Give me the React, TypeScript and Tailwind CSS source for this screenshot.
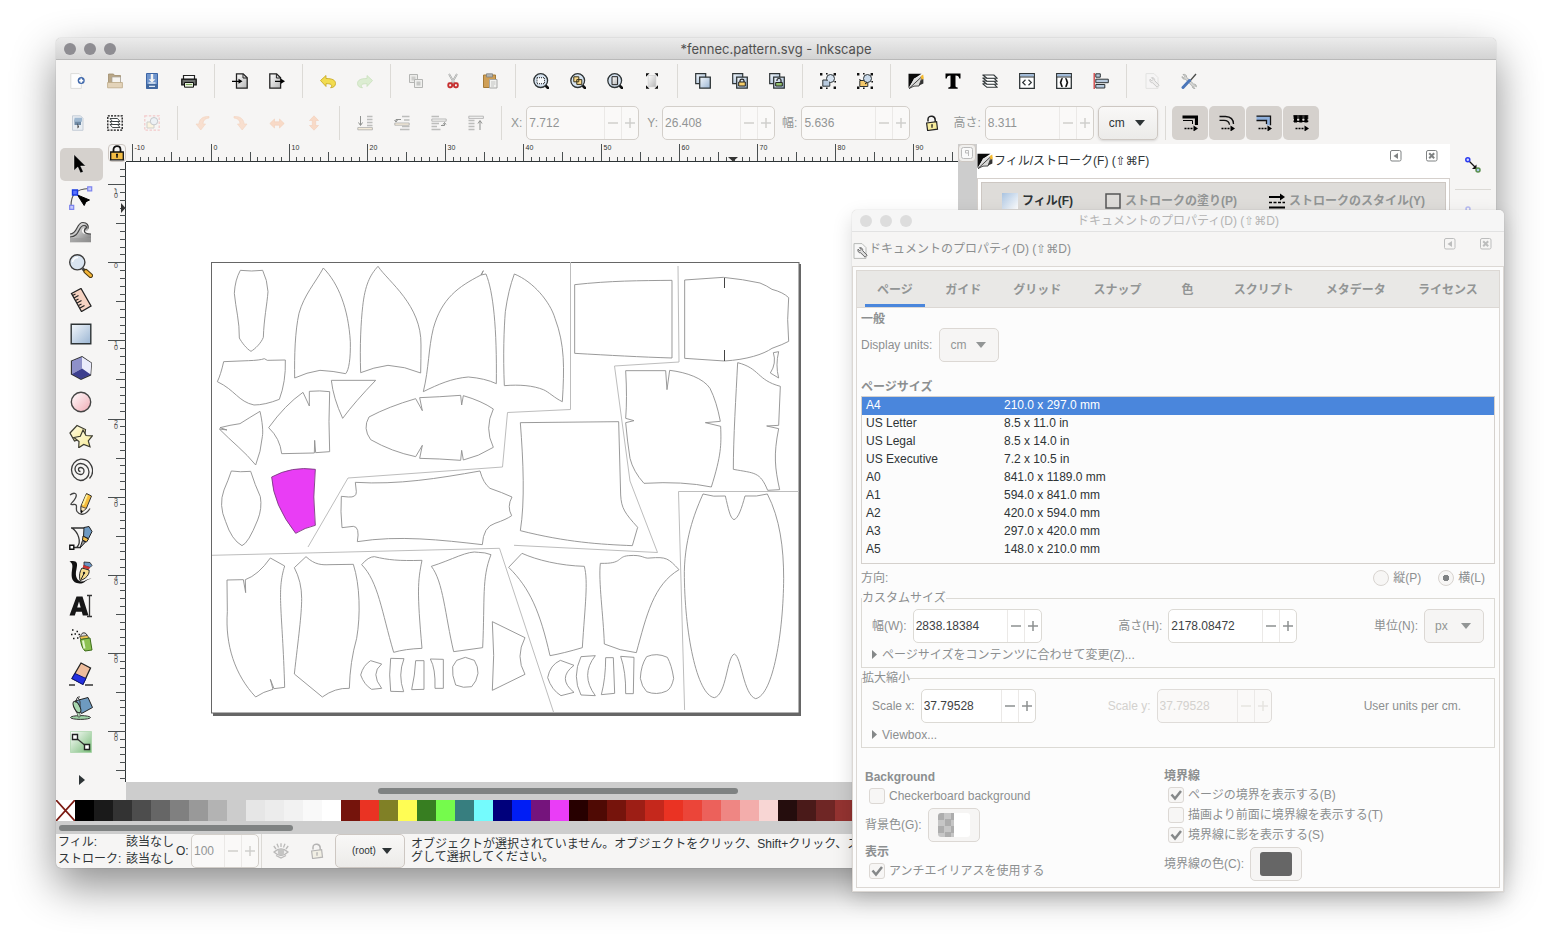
import React from "react";

type IconProps = { children: React.ReactNode; size?: "sm" | "lg"; faded?: boolean };

/** Icon canvas: "sm" is 16px (toolbars), "lg" is 24px (toolbox). */
function Icon({ children, size = "sm", faded = false }: IconProps) {
  const box = size === "sm" ? "size-4" : "size-6";
  return (
    <svg
      aria-hidden="true"
      viewBox={size === "sm" ? "0 0 16 16" : "0 0 24 24"}
      className={`${box} shrink-0 ${faded ? "opacity-30" : ""}`}
      fill="none"
    >
      {children}
    </svg>
  );
}

function Gradients() {
  const list: [string, string, string][] = [
    ["gBlue", "#f4f8fc", "#9ab5d3"],
    ["gSky", "#a9c3e0", "#ffffff"],
    ["gGrey", "#ffffff", "#b5b5b5"],
    ["gPink", "#ffffff", "#f0aab4"],
    ["gYellow", "#fffef0", "#f7e98a"],
    ["gGreen", "#ffffff", "#74b974"],
    ["gInk", "#050505", "#d9d9d9"],
    ["gWave", "#ffffff", "#777777"],
  ];
  return (
    <svg aria-hidden="true" className="absolute size-0">
      <defs>
        {list.map(([id, a, b]) => (
          <linearGradient key={id} id={id} x1="0" y1="0" x2="1" y2="1">
            <stop offset="0" stopColor={a} />
            <stop offset="1" stopColor={b} />
          </linearGradient>
        ))}
      </defs>
    </svg>
  );
}

const INK = "#2e3436";

const lens = (
  <>
    <path d="M11.5 11.5L15 15" stroke="#111" strokeWidth="2.6" strokeLinecap="round" />
    <circle cx="7.7" cy="7.6" r="6.9" fill="#d5e2ef" stroke={INK} strokeWidth="1.3" />
  </>
);

const stacked = (
  <>
    <path d="M.7.7h10v10h-10z" fill="url(#gBlue)" stroke={INK} strokeWidth="1.2" />
    <path d="M4.7 4.2h10.6v11H4.7z" fill="url(#gBlue)" stroke={INK} strokeWidth="1.3" />
  </>
);

const groupDots = (
  <g fill="#111">
    <path d="M0 0h2.4v2.4H0zM13.6 0H16v2.4h-2.4zM0 13.6h2.4V16H0zM13.6 13.6H16V16h-2.4zM6 0h1.6v1.6H6zM6 14.4h1.6V16H6zM14.4 8H16v1.6h-1.6z" />
  </g>
);

const fillPen = (
  <>
    <path d="M.5.8h13L6.500 5.500.5 15z" fill="#0a0a0a" />
    <path d="M1 15.500L6 5.500 14 2.500 11 13Q6 12 1 15.500z" fill="url(#gGrey)" />
    <path d="M1 15.500L14.500 3 11 13Q6 12 1 15.500z" fill="#d9d9d7" stroke="#222" strokeWidth=".8" />
    <path d="M12.600 3.200l2.600-1.600.6 4-2 1.600z" fill="#f5b92d" />
    <path d="M11 12.600l2.400-5.800 2-.8v4.400z" fill="#333" />
  </>
);

const pageWrench = (
  <>
    <path d="M2 .6h8l4 4v10.800H2z" fill="#f8f8f8" stroke="#b8bab8" />
    <path d="M6 6.200l1.800 1.600 1.300-1.400L7.500 4.700c1.800-.5 3.600 1 3.200 3l4.400 4.500-2 2-4.500-4.400C6.600 10 5.400 8.200 6 6.200z" fill="#dcdcdc" stroke="#666" />
  </>
);

const padlockOpen = (body: string) => (
  <>
    <path d="M4 6.500V4.300C4 2 6 .8 8.200 1.300c2 .5 3 1.900 3 3.700v2" stroke="#222" strokeWidth="1.500" />
    <path d="M2.600 8l10-1.400.9 7.600-9.900 1.300z" fill={body} stroke="#222" strokeWidth="1.200" />
    <path d="M8 9.500v3.300M7.300 9.800h1.500" stroke="#222" strokeWidth="1.300" />
  </>
);

const ICONS = {
  newDoc: (
    <>
      <path d="M.8.6h8.500l2 2.200v12.600H.8z" fill="#fdfdfd" stroke="#dcdcda" />
      <circle cx="11.200" cy="7.600" r="3.500" fill="#3f68ab" />
      <path d="M11.200 5.500v4.200M9.100 7.600h4.200" stroke="#fff" strokeWidth="1.700" />
    </>
  ),
  open: (
    <>
      <path d="M1.500 1h5l1 1.500h6v10h-12z" fill="#b9a787" stroke="#a08d6c" strokeWidth=".8" />
      <path d="M5 4h8.500v6H5z" fill="#f6f4f0" stroke="#a9a49b" strokeWidth=".7" />
      <path d="M.6 9.500h14.800v5.300H.6z" fill="#e3d3b9" stroke="#bda987" strokeWidth=".8" />
    </>
  ),
  save: (
    <>
      <path d="M2.500.5h11v15h-11z" fill="#6e94cc" stroke="#3c65a5" />
      <path d="M2.500 11h11v4.500h-11z" fill="#42699f" />
      <path d="M8 1v7" stroke="#f3f3f3" strokeWidth="2.400" />
      <path d="M4.600 6.300h6.800L8 9.800z" fill="#f3f3f3" />
      <path d="M4.500 10h7M5 13.300h6" stroke="#dce6f4" strokeWidth="1.300" />
    </>
  ),
  print: (
    <>
      <path d="M2.500 2.500h11v4h-11z" fill="#fafafa" stroke="#222" strokeWidth="1.200" />
      <path d="M.8 6.200h14.400v5.600H.8z" fill="#6e716f" stroke="#111" strokeWidth="1.300" />
      <path d="M3.500 9.500h9v4.700h-9z" fill="#eaf3df" stroke="#111" />
      <path d="M4.800 11.500h6.400" stroke="#7aa356" />
    </>
  ),
  importIcon: (
    <>
      <path d="M4.500.8h6.700l4 4v10.400H4.500z" fill="url(#gGrey)" stroke="#222" strokeWidth="1.300" />
      <path d="M11 1v4h4" stroke="#222" />
      <path d="M0 8.300h8" stroke="#000" strokeWidth="1.300" />
      <path d="M6.500 5.800l4 2.500-4 2.500z" fill="#000" />
    </>
  ),
  exportIcon: (
    <>
      <path d="M.8.8h6.800l4 4v10.400H.8z" fill="url(#gGrey)" stroke="#222" strokeWidth="1.300" />
      <path d="M7.400 1v4h4" stroke="#222" />
      <path d="M6 8.300h7" stroke="#000" strokeWidth="1.300" />
      <path d="M12 5.800l4 2.500-4 2.500z" fill="#000" />
    </>
  ),
  undo: <path d="M.5 7.500L6 2.500v3c6.500 0 9.500 1.700 9.500 4.900 0 2.400-1.700 4.200-5 4.400 2-1.800 2-4.300-4.500-4.100v2.800z" fill="#f2dc50" stroke="#c4a51d" strokeWidth=".8" />,
  redo: <path d="M15.500 7.500L10 2.500v3C3.500 5.500.5 7.200.5 10.400c0 2.400 1.700 4.200 5 4.400-2-1.800-2-4.300 4.500-4.100v2.800z" fill="#dcedd2" stroke="#c9e0bd" strokeWidth=".8" />,
  copy: (
    <>
      <path d="M1.500 1.500h8v8h-8z" fill="#ececea" stroke="#b4b5b3" />
      <path d="M3.500 3.500h4v4h-4z" fill="#cdcdcb" />
      <path d="M6.500 6.500h8v8h-8z" fill="#efefed" stroke="#b4b5b3" />
      <path d="M8.500 8.500h4v4h-4z" fill="#c6c7c5" />
    </>
  ),
  cut: (
    <>
      <path d="M4 1l5.500 9.500M12 1l-5.500 9.500" stroke="#9d9f9d" strokeWidth="1.800" />
      <path d="M4 1l5.500 9.500M12 1l-5.500 9.500" stroke="#eee" strokeWidth=".7" />
      <rect x="3.300" y="10.200" width="3.800" height="4" rx="1.200" stroke="#c62f2f" strokeWidth="1.900" />
      <rect x="9" y="10.200" width="3.800" height="4" rx="1.200" stroke="#c62f2f" strokeWidth="1.900" />
    </>
  ),
  paste: (
    <>
      <path d="M1.500 2h12v12.500h-12z" fill="#cf9f56" stroke="#a47a37" />
      <path d="M4.500.8h6V4h-6z" fill="#b5b6b3" stroke="#80827e" strokeWidth=".8" />
      <path d="M7.500 6.500H15V15H7.500z" fill="#f2f2f0" stroke="#a6a7a5" />
      <path d="M9 9h4.500M9 11h4.500M9 13h3" stroke="#c2c3c1" />
    </>
  ),
  zoomSelection: (
    <>
      {lens}
      <rect x="4" y="4.700" width="7.500" height="6" fill="#f8fafc" stroke="#222" strokeDasharray="1 1" />
    </>
  ),
  zoomDrawing: (
    <>
      {lens}
      <path d="M3.800 3.800h5v5h-5zM6.800 6.600h5v4.800h-5z" fill="#fbdc91" stroke="#3a3218" />
    </>
  ),
  zoomPage: (
    <>
      {lens}
      <path d="M5 3.700h5.600v8H5z" fill="url(#gGrey)" stroke="#222" />
    </>
  ),
  zoomWidth: (
    <>
      <path d="M4.200 2.500h7.600v11.200H4.200z" fill="url(#gGrey)" stroke="#c8c8c8" strokeWidth=".6" />
      <path d="M2 .3h3.500L2 3.800zM14 .3h-3.500L14 3.800zM2 15.700h3.500L2 12.200zM14 15.700h-3.500l3.500-3.500z" fill="#111" />
    </>
  ),
  duplicate: stacked,
  clone: (
    <>
      {stacked}
      <path d="M8 9V7.700c0-2.200 4-2.200 4 0V9" stroke="#222" strokeWidth="1.200" />
      <path d="M6.700 9h6.600v4H6.700z" fill="#f6ce6a" stroke="#222" />
    </>
  ),
  unlink: (
    <>
      {stacked}
      <path d="M8 8V7c0-2 4-2 4 0v2" stroke="#222" strokeWidth="1.200" />
      <path d="M6.700 9.500h6.600v3.500H6.700z" fill="#8fbf6a" stroke="#222" />
    </>
  ),
  group: (
    <>
      {groupDots}
      <path d="M2.800 7h7v6.200h-7z" fill="#b9cbdf" stroke={INK} />
      <circle cx="10.500" cy="5.500" r="4" fill="#d5e1ee" stroke={INK} />
      <path d="M4 8h5v4H4z" fill="#b9cbdf" />
    </>
  ),
  ungroup: (
    <>
      {groupDots}
      <path d="M2.800 7.500h8v6h-8z" fill="#f3c86b" stroke={INK} />
      <circle cx="10.500" cy="5.500" r="4" fill="#c9d9ea" stroke={INK} />
      <path d="M4 8l-1.500-2M8 11l2-1.500" stroke="#111" />
    </>
  ),
  fillStroke: fillPen,
  textIcon: <path d="M.5.5h15v5h-1.300c-.3-2.200-1.200-3-3.700-3v10.300c0 1.200.5 1.600 2.200 1.700v1.300H3.300v-1.300c1.700-.1 2.200-.5 2.200-1.700V2.500c-2.500 0-3.400.8-3.700 3H.5z" fill="#000" />,
  layers: (
    <g fill="#fff" stroke={INK} strokeWidth="1.100" strokeLinejoin="round">
      <path d="M.8 10.800h11l3.500 3.500H5z" />
      <path d="M.8 8h11l3.500 3.300H5z" />
      <path d="M.8 5h11l3.500 3.300H5z" />
      <path d="M.8 2h11l3.500 3.300H5z" />
    </g>
  ),
  xml: (
    <>
      <path d="M.7.7h14.600v14.600H.7z" fill="#fff" stroke={INK} strokeWidth="1.300" />
      <path d="M1.300 1.300h13.400v2.200H1.300z" fill="#9db9da" />
      <path d="M.7 4h14.600" stroke={INK} />
      <path d="M6.500 6.800L3.700 9.500l2.800 2.700M9.500 6.800l2.800 2.700-2.800 2.700" stroke={INK} strokeWidth="1.200" />
    </>
  ),
  css: (
    <>
      <path d="M.7.7h14.600v14.600H.7z" fill="#fff" stroke={INK} strokeWidth="1.300" />
      <path d="M1.300 1.300h13.400v2.200H1.300z" fill="#9db9da" />
      <path d="M.7 4h14.600" stroke={INK} />
      <path d="M6.700 5.500C4.300 5.500 6.300 9 4 9.500c2.300.5.3 4 2.700 4M9.300 5.500c2.400 0 .4 3.500 2.700 4-2.300.5-.3 4-2.700 4" stroke="#111" strokeWidth="1.700" />
    </>
  ),
  align: (
    <>
      <path d="M1.200 0v16" stroke="#d03a3a" strokeWidth="1.300" />
      <path d="M2.800.8h4.500v3.400H2.800zM2.800 11.500h9v3.500h-9z" fill="#b9cbdf" stroke={INK} />
      <path d="M2.800 6.200h12.500v3.500H2.800z" fill="#b9cbdf" stroke={INK} />
    </>
  ),
  docProps: pageWrench,
  prefs: (
    <>
      <path d="M2 1.500l1.800 1.800L2.500 4.800 1 3.500c0 2 1.500 3 3.300 2.600l7 7c-.2 1.700 1 2.600 2.600 2.400L12.500 14l1.300-1.400 1.600 1.200c.2-1.800-1-2.900-2.700-2.700L5.500 4.200C6 2.300 4 .8 2 1.500z" fill="#d7d7d5" stroke="#9a9c9a" strokeWidth=".7" />
      <path d="M15 1L8.500 8.500" stroke="#4a4c4a" strokeWidth="1.300" />
      <path d="M8.500 7.500L2 14.500" stroke="#4c77b9" strokeWidth="3" strokeLinecap="round" />
    </>
  ),
  selectAll: (
    <>
      <path d="M2.500.8h8L13 3.300v12H2.500z" fill="#e8edf2" stroke="#c6ced7" />
      <path d="M4.500 4.500h6.500v5.500H4.500z" fill="#6f8aa5" />
      <path d="M4.500 2.800H12v4H4.500z" fill="#9fb8d0" />
      <path d="M7.500 8v5.500L9 12z" fill="#333" />
    </>
  ),
  selectLayers: (
    <>
      <rect x=".8" y=".8" width="14.400" height="14.400" stroke="#111" strokeWidth="1.300" strokeDasharray="2 1.200" />
      <g fill="#fff" stroke={INK} strokeWidth=".9">
        <path d="M3 9.500h7.500l2.500 3H5.500z" />
        <path d="M3 6.500h7.500l2.500 3H5.500z" />
        <path d="M3 3.500h7.500l2.500 3H5.500z" />
      </g>
    </>
  ),
  deselect: (
    <>
      <rect x=".8" y=".8" width="14.400" height="14.400" stroke="#f3c9c9" strokeWidth="1.200" strokeDasharray="2.500 1.500" />
      <path d="M3 7h7v6H3z" fill="#fbf4df" stroke="#cfcfcb" />
      <circle cx="10" cy="6.200" r="3.700" fill="#edf1f5" stroke="#c5c8cb" />
    </>
  ),
  rotateCcw: <path d="M14 1.500C7.500 1 4 4.500 4 9H1l4.800 6L10.500 9H8c0-3.500 2-5.500 6-6z" fill="#f8dfcf" stroke="#f3d3c0" strokeWidth=".6" />,
  rotateCw: <path d="M2 1.500C8.500 1 12 4.500 12 9h3l-4.800 6L5.500 9H8c0-3.500-2-5.500-6-6z" fill="#f8dfcf" stroke="#f3d3c0" strokeWidth=".6" />,
  flipH: <path d="M.8 8.500L5.500 4v2.800h5V4l4.700 4.500-4.700 4.500v-2.800h-5V13z" fill="#f8dac7" stroke="#f4cfb9" strokeWidth=".6" />,
  flipV: <path d="M8 .8l4.500 4.700H9.700v5h2.800L8 15.200l-4.500-4.700h2.800v-5H3.500z" fill="#f8dac7" stroke="#f4cfb9" strokeWidth=".6" />,
  toBottom: (
    <>
      <path d="M10 1.500h5.500M10 4.500h5.500M10 7.500h5.500M10 10.500h5.500" stroke="#bcbdbb" strokeWidth="1.700" />
      <path d="M3.500 1v9M1.500 7.500l2 3 2-3" stroke="#8f918f" />
      <path d="M.8 12.600h14.600v2.200H.8z" fill="#faf0dc" stroke="#aaa" strokeWidth=".8" />
    </>
  ),
  lower: (
    <>
      <path d="M8 1.500h7.500M10 5h5.500M8 11.500h7.500M6 14.500h9.500" stroke="#bcbdbb" strokeWidth="1.700" />
      <path d="M7 4.500H2v2M.5 5l1.500 2 1.500-2" stroke="#8f918f" />
      <path d="M.8 8h14.400v2.200H.8z" fill="#faf0dc" stroke="#aaa" strokeWidth=".8" />
    </>
  ),
  raise: (
    <>
      <path d="M.5 1.500H8M.5 8.500H8M.5 11.500H6M.5 14.500h9" stroke="#bcbdbb" strokeWidth="1.700" />
      <path d="M10 10.500h3.500v-2M12 9.500l1.500-2 1.500 2" stroke="#8f918f" />
      <path d="M.8 4h14.400v2.200H.8z" fill="#f6f6f4" stroke="#aaa" strokeWidth=".8" />
    </>
  ),
  toTop: (
    <>
      <path d="M.5 5.500h6M.5 8.500h6M.5 11.500h6M.5 14.500h6" stroke="#bcbdbb" strokeWidth="1.700" />
      <path d="M12 15V6M10 8.500l2-3 2 3" stroke="#8f918f" />
      <path d="M.8 1.200h14.600v2.200H.8z" fill="#f6f6f4" stroke="#aaa" strokeWidth=".8" />
    </>
  ),
  lockOpen: padlockOpen("#f7ec9c"),
  scaleStroke: (
    <>
      <path d="M.5 2h14v8" stroke="#000" strokeWidth="3.200" />
      <path d="M1 5.500h9.500V9" stroke="#000" />
      <path d="M2.500 13.500h9" stroke="#000" strokeWidth="1.600" strokeDasharray="2 1" />
      <path d="M11.500 10.500l4.500 3-4.500 3z" fill="#000" />
    </>
  ),
  scaleCorners: (
    <>
      <path d="M.5 1.500h6Q14.500 2 14.500 9M.5 5.300h4.500q5 0 5.500 4.500" stroke="#111" strokeWidth="1.300" />
      <path d="M2.500 13.500h9" stroke="#000" strokeWidth="1.600" strokeDasharray="2 1" />
      <path d="M11.500 10.500l4.500 3-4.500 3z" fill="#000" />
    </>
  ),
  moveGradients: (
    <>
      <path d="M.5 1.200h14v9h-4V5.500H.5z" fill="#8fb0dc" />
      <path d="M.5 1.200h14v9M.5 5.500h10V9" stroke="#111" strokeWidth="1.300" />
      <path d="M2.500 13.500h9" stroke="#000" strokeWidth="1.600" strokeDasharray="2 1" />
      <path d="M11.500 10.500l4.500 3-4.500 3z" fill="#000" />
    </>
  ),
  movePatterns: (
    <>
      <path d="M.3.3h15v1.500H.3z" fill="#000" />
      <path d="M2.500.5v7M7.800.5v7M13 .5v7" stroke="#000" strokeWidth="3" />
      <path d="M.5 3h14.800M.5 6.300h14.800" stroke="#000" strokeWidth="1.500" />
      <path d="M5.200 3.800v1.600M10.400 3.800v1.600" stroke="#e5e3e0" strokeWidth="1.200" />
      <path d="M2.500 13.500h9" stroke="#000" strokeWidth="1.600" strokeDasharray="2 1" />
      <path d="M11.500 10.500l4.500 3-4.500 3z" fill="#000" />
    </>
  ),
};

type IconName = keyof typeof ICONS;

const COMMANDS: [IconName, string][][] = [
  [["newDoc", "New"], ["open", "Open"], ["save", "Save"], ["print", "Print"]],
  [["importIcon", "Import"], ["exportIcon", "Export"]],
  [["undo", "Undo"], ["redo", "Redo"]],
  [["copy", "Copy"], ["cut", "Cut"], ["paste", "Paste"]],
  [["zoomSelection", "Zoom selection"], ["zoomDrawing", "Zoom drawing"], ["zoomPage", "Zoom page"], ["zoomWidth", "Zoom page width"]],
  [["duplicate", "Duplicate"], ["clone", "Clone"], ["unlink", "Unlink clone"]],
  [["group", "Group"], ["ungroup", "Ungroup"]],
  [["fillStroke", "Fill and stroke"], ["textIcon", "Text"], ["layers", "Layers"], ["xml", "XML editor"], ["css", "Selectors"], ["align", "Align"]],
  [["docProps", "Document properties"], ["prefs", "Preferences"]],
];

const SELECT_TOOLS: [IconName, string][][] = [
  [["selectAll", "Select all"], ["selectLayers", "Select in layers"], ["deselect", "Deselect"]],
  [["rotateCcw", "Rotate left"], ["rotateCw", "Rotate right"], ["flipH", "Flip horizontal"], ["flipV", "Flip vertical"]],
  [["toBottom", "To bottom"], ["lower", "Lower"], ["raise", "Raise"], ["toTop", "To top"]],
];

function Separator() {
  return <span className="mr-[6px] ml-[7px] h-[34px] w-px shrink-0 bg-[#dcdad6]" />;
}

function ToolGroup({ items }: { items: [IconName, string][] }) {
  return (
    <>
      {items.map(([name, label]) => (
        <button key={name} aria-label={label} className="flex h-[34px] w-[37px] shrink-0 items-center justify-center">
          <Icon faded={name === "docProps"}>{ICONS[name]}</Icon>
        </button>
      ))}
    </>
  );
}

type SpinTone = "toolbar" | "dialog" | "disabled";

function Spin({ id, value, width, tone, label }: { id: string; value: string; width: string; tone: SpinTone; label: string }) {
  const frame =
    tone === "dialog" ? "border-[#dcdad5] bg-white text-[#3d4143]" : tone === "toolbar" ? "border-[#d3cfca] bg-[#faf9f8] text-[#929595]" : "border-[#dfdcd9] bg-[#faf9f8] text-[#d3d1ce]";
  const sign = tone === "dialog" ? "text-[#8d9091]" : tone === "toolbar" ? "text-[#d0cfcd]" : "text-[#e6e4e1]";
  return (
    <span className={`flex h-[34px] shrink-0 overflow-hidden rounded-[5px] border ${frame} ${width}`}>
      <input id={id} aria-label={label} defaultValue={value} className="w-0 min-w-0 flex-1 bg-transparent pb-px pl-[2px] outline-none" />
      <button aria-label={`${label} −`} className={`flex w-[17px] items-center justify-center border-l border-[#ebe9e7] ${sign}`}>
        <svg viewBox="0 0 10 10" className="size-[10px]" stroke="currentColor" strokeWidth="1.500"><path d="M0 5h10" /></svg>
      </button>
      <button aria-label={`${label} +`} className={`flex w-[17px] items-center justify-center border-l border-[#ebe9e7] ${sign}`}>
        <svg viewBox="0 0 10 10" className="size-[10px]" stroke="currentColor" strokeWidth="1.500"><path d="M0 5h10M5 0v10" /></svg>
      </button>
    </span>
  );
}

function DropDown({ id, value, label, look, width }: { id: string; value: string; label: string; look: string; width: string }) {
  return (
    <span className={`relative inline-flex h-[34px] shrink-0 items-center rounded-[5px] border ${look} ${width}`}>
      <select id={id} aria-label={label} defaultValue={value} className="h-full w-full appearance-none bg-transparent pb-px pl-[10px] outline-none">
        <option>{value}</option>
      </select>
      <svg aria-hidden="true" viewBox="0 0 10 6" className="pointer-events-none absolute right-[12px] h-[6px] w-[10px]" fill="currentColor"><path d="M0 0h10L5 6z" /></svg>
    </span>
  );
}

const TOOLS: [string, React.ReactNode][] = [
  ["Selector", <path d="M5 2.500v16l3.800-3.500 2.700 6 2.800-1.300-2.700-5.700h5z" fill="#000" stroke="#fff" strokeWidth=".4" />],
  ["Node", (
    <>
      <path d="M2 20C2 9 6 3 20 2.500" stroke="#555" strokeWidth="1.200" />
      <path d="M8.500 9L20.500 14l-3.500 1.700-1.800 3.800z" fill="#000" stroke="#000" />
      <path d="M3.500 4h5v5h-5z" fill="#5b74ff" stroke="#1a3be0" strokeWidth="1.400" />
      <path d="M18.700.8h4v4h-4zM.7 19.300h4v4h-4z" fill="#c5c9fb" stroke="#7d84ee" strokeWidth="1.200" />
    </>
  )],
  ["Tweak", (
    <>
      <path d="M1 14c8 0 6-11 14-11 4 0 6 4 4 7-2 2-5 0-4-2-3 1-3 6 2 6h5v8H1z" fill="url(#gWave)" />
      <path d="M1 14c8 0 6-11.500 13-11.500 4 0 6 3 5 6M1 17c10 0 8-11.500 14-11.500 2.500 0 3 2 2 3M22 14c-7 0-8-3-5-6" stroke="#444" strokeWidth="1.200" />
      <path d="M1 18h21v4.500H1z" fill="#999" opacity=".6" />
    </>
  )],
  ["Zoom", (
    <>
      <path d="M13.500 14.500l3 3" stroke="#444" strokeWidth="3" />
      <path d="M17 17.500l4.500 4" stroke="#4e3b12" strokeWidth="5" strokeLinecap="round" />
      <path d="M17 17.500l4.500 4" stroke="#f3b436" strokeWidth="3" strokeLinecap="round" />
      <circle cx="8.300" cy="8.300" r="7.600" fill="#d9e4f0" stroke="#3c3c3c" strokeWidth="1.400" />
      <path d="M3.500 8C4 5 6 3.500 9 3.500" stroke="#fff" strokeWidth="1.500" />
    </>
  )],
  ["Measure", (
    <>
      <path d="M2.500 5.500l9.500-5 10 17.500-9.500 5.500z" fill="#f6d3c2" stroke="#222" strokeWidth="1.300" />
      <path d="M3.500 7.500l3-1.500M5 10l4.500-2.500M6.500 12.500l3-1.500M8 15l4.500-2.500M9.500 17.500l3-1.500M11 20l4.500-2.500" stroke="#222" strokeWidth="1.200" />
    </>
  )],
  ["Rectangle", <path d="M2.200 2.200h19.600v19.600H2.200z" fill="url(#gBlue)" stroke={INK} strokeWidth="1.400" />],
  ["3D box", (
    <>
      <path d="M2.500 5L13 .8l9.300 6.200-.8 12L12 23.200l-9.500-5z" fill="#a9abd8" stroke="#333" strokeWidth="1.300" />
      <path d="M13 1v11.500l8.500 6 .8-11.500z" fill="#eaebfb" />
      <path d="M3 18l10-5.500 8.500 6-9.500 4.500z" fill="#3d3f8e" />
      <path d="M13 1v11.500L3 18V5.300z" fill="#8e90c8" />
    </>
  )],
  ["Ellipse", <circle cx="12" cy="12" r="9.700" fill="url(#gPink)" stroke="#444" strokeWidth="1.400" />],
  ["Star", (
    <>
      <path d="M1 9l7-7.500 8.500 4-1 8-10 3.500z" fill="url(#gYellow)" stroke="#3c3c30" strokeWidth="1.200" />
      <path d="M14 6l3 5.500 6.300.3-4 5 1.700 6-6.300-2.300-5 3.300.3-6.300-5-4 6.300-1.200z" fill="url(#gYellow)" stroke="#3c3c30" strokeWidth="1.200" />
    </>
  )],
  ["Spiral", <path d="M11.500 13.500A2 2 0 0 1 11.500 9.500A3.500 3.500 0 0 1 11.500 16.500A5 5 0 0 1 11.500 5.500A7.200 7.200 0 0 1 11.500 22.500A10.800 10.800 0 0 1 11.500 1.200A11 11.500 0 0 1 20.500 20.500" stroke="#3b3b3b" strokeWidth="1.300" />],
  ["Pencil", (
    <>
      <path d="M1 3c4-3 8-2 5.500 3C4 11-1 13 4 12.500c6-1 2 4 4 7 3 4.500 9 3.500 13-3" stroke="#444" strokeWidth="1.300" />
      <path d="M12 20l0-6L17.500 1.500l5 2.500L17.500 16z" fill="#f6bd3c" stroke="#333" />
      <path d="M12 14.500l5.500 2L12 21z" fill="#fbe6b8" stroke="#333" strokeWidth=".8" />
      <path d="M12 18l2 1-2 2.500z" fill="#000" />
      <path d="M18 3l-4 10" stroke="#fdf2a0" strokeWidth="2" />
    </>
  )],
  ["Bezier", (
    <>
      <path d="M2 2h14M3 2c6 4 10 14 5 19M4 21.500h8" stroke="#333" strokeWidth="1.300" />
      <path d="M15 1.500L20 .5l3 5-3.500 7-5-2z" fill="#6f9ac2" stroke="#222" />
      <path d="M14 10l5.500 3-2 3-4-2z" fill="#f3c04b" stroke="#222" />
      <path d="M13.500 14.500l3 1.500-5.500 6z" fill="#999" stroke="#222" />
      <path d="M.8 19.300h4v4h-4z" fill="#fff" stroke="#111" strokeWidth="1.400" />
    </>
  )],
  ["Calligraphy", (
    <>
      <path d="M.5 1.500C8 0 9 3 7.500 9c-2 8 1 12 5 12.500 4 0 6-4 10-2.500-5-1-6 4.500-12 4.500C2.500 23 2 17 3 10c.6-4 1-6.500-2.500-8.500z" fill="#111" />
      <path d="M15 2l6 .5 2 3-2 2-6-2z" fill="#6b95c3" stroke="#222" strokeWidth=".8" />
      <path d="M14 5l7 2.300-1 2.200-6-1.500z" fill="#c33" />
      <path d="M13 8l7 2c1 4-3 9-9 10.500-1-5-.5-9 2-12.500z" fill="#f6dc8e" stroke="#222" />
      <path d="M12 19.500l3-6" stroke="#222" />
      <circle cx="15" cy="13" r="1.200" fill="#222" />
    </>
  )],
  ["Text", (
    <>
      <path d="M.5 21.500L7.500 2.500h6l6 19h-5.700l-1-3.700H7l-1.200 3.700zM8.200 13.500h3.500L10 7.500z" fill="#161616" fillRule="evenodd" />
      <path d="M18 1.500h5M18 22.500h5M20.500 1.500v21" stroke="#333" strokeWidth="1.300" />
    </>
  )],
  ["Spray", (
    <>
      <path d="M3 2h1.500M7.500 3.500H9M2 6.500h1.500M5.500 6h1.500M9.500 6.500H11M4 10.500h1.500M8 10h1.500" stroke="#111" strokeWidth="1.700" />
      <path d="M12 9c-1-4 4-6 6-2v3" fill="#ddd" stroke="#333" />
      <path d="M10.500 8.500l8-1 1.500 2.500-8 1.500z" fill="#f1c652" stroke="#444" strokeWidth=".8" />
      <path d="M11.500 11.500l9.500-1.500 2 12-7 1c-3-3-4-7-4.500-11.500z" fill="#8cc152" stroke="#3d6d19" />
      <path d="M14 12.500l1.500 8" stroke="#e4f5cf" strokeWidth="2" />
    </>
  )],
  ["Eraser", (
    <>
      <path d="M12 1l9.500 5-7.500 16-11-5.500z" fill="#eebd9d" stroke="#222" strokeWidth="1.300" />
      <path d="M6 11.500l11 5-3.200 6L3 16.500z" fill="#2530e0" stroke="#0d1580" />
      <path d="M0 23h6M16 23h8" stroke="#333" strokeWidth="1.400" />
    </>
  )],
  ["Bucket", (
    <>
      <ellipse cx="11.500" cy="21.500" rx="10" ry="1.900" fill="#9fd5a6" stroke="#333" />
      <path d="M5 8c-2 4 4 8 4 13h2c1-5-4-9-1-13z" fill="#b4dfb9" stroke="#444" strokeWidth=".7" />
      <path d="M6 5L19 1.500l4.500 10-11 6z" fill="#6e9abf" stroke="#222" />
      <ellipse cx="8" cy="11" rx="2.800" ry="6.300" transform="rotate(-27 8 11)" fill="#a9d8b0" stroke="#222" />
      <path d="M7 7c0-5 2-6.500 4-6M8 1c4 3 3 7 3 10" stroke="#333" />
    </>
  )],
  ["Gradient", (
    <>
      <path d="M1.500 1.500h21v21h-21z" fill="url(#gGreen)" stroke="#9fd09f" strokeWidth=".6" />
      <path d="M6 7l12 10" stroke="#333" strokeWidth="1.300" />
      <path d="M3.500 4.500h5v5h-5zM15.500 14.500h5v5h-5z" fill="#fff" stroke="#222" strokeWidth="1.400" />
    </>
  )],
];

const UNIT = 78.1;
const ORIGIN_X = 211.5;
const ORIGIN_Y = 262.3;

function ticks(origin: number, from: number, to: number) {
  const out: { at: number; n: number }[] = [];
  for (let n = Math.ceil(((from - origin) / UNIT) * 10); origin + (n * UNIT) / 10 < to; n++) {
    out.push({ at: Math.round(origin + (n * UNIT) / 10) + 0.5, n });
  }
  return out;
}

function tickStart(n: number, major: number, mid: number, minor: number) {
  return n % 10 === 0 ? major : n % 5 === 0 ? mid : minor;
}

function RulerX() {
  return (
    <svg aria-hidden="true" viewBox="126 144 832 18" preserveAspectRatio="xMinYMin slice" className="h-[18px] w-full shrink-0 bg-[#f6f5f4]">
      <path d="M126 161.500H2000" stroke={INK} />
      {ticks(ORIGIN_X, 130, 958).map(({ at, n }) => (
        <g key={n}>
          <path d={`M${at - 1} ${tickStart(n, 144, 152, 157)}V161`} stroke="#4a4f50" />
          {n % 10 === 0 && (
            <text x={at + 1} y="149.500" fontSize="7" fill="#333">{n}</text>
          )}
        </g>
      ))}
      <path d="M728 157h10l-5 4.500z" fill="#333" />
    </svg>
  );
}

function RulerY() {
  return (
    <svg aria-hidden="true" viewBox="108 162 18 620" preserveAspectRatio="xMinYMin slice" className="h-[620px] w-[18px] shrink-0">
      <path d="M125.500 162V782" stroke={INK} />
      {ticks(ORIGIN_Y, 166, 782).map(({ at, n }) => (
        <g key={n}>
          <path d={`M${tickStart(n, 108, 116, 120)} ${at}H126`} stroke="#4a4f50" />
          {n % 10 === 0 &&
            String(n).split("").map((c, i) => (
              <text key={i} x="114" y={at + 5 + i * 4} fontSize="7" fill="#444">{c}</text>
            ))}
        </g>
      ))}
      <path d="M121 203v10l4.500-5z" fill="#333" />
    </svg>
  );
}

const PIECES_NW = [
  "M106 46Q140 50 173 46Q187 75 189 110C186 150 177 190 175 247C168 265 150 282 138 289C125 282 110 262 103 249C104 200 92 160 88 115Q90 75 106 46Z",
  "M355 39C400 85 430 160 436 260C437 310 432 345 422 356Q385 348 345 346Q305 352 269 369C268 300 270 230 282 175C297 120 330 85 355 39Z",
  "M519 34C550 80 650 150 648 270Q648 310 647 354Q600 334 549 331Q505 337 467 353C464 270 468 200 473 155C480 90 495 60 519 34Z",
  "M828 60L843 57C865 110 876 220 874 386Q840 370 790 366C740 370 700 388 655 410C672 340 670 280 685 220C710 130 760 95 828 60L835 47L829 60",
  "M56 320L130 317Q165 316 178 311L187 316L241 315Q243 380 223 433Q180 450 147 450C100 440 90 405 37 380Q47 360 56 320Z",
  "M379 376H512Q450 440 413 490Q385 430 379 376Z",
  "M165 469C172 500 175 530 172 545Q168 590 152 630C120 590 80 560 43 522L66 525L45 518Q75 510 105 506Q130 490 165 469Z",
  "M294 412L313 453V409Q345 406 374 410Q370 500 374 590L332 593L329 556L328 594L230 596Q225 550 191 518Q240 450 294 412Z",
  "M632 431L652 467L644 428Q700 426 767 421L770 450L775 422Q830 438 865 462Q837 520 865 577Q820 605 775 615L770 586L767 616Q700 611 644 610L652 571L632 605Q560 590 497 554Q472 520 492 486Q550 455 632 431Z",
];

const PIECES_NE = [
  "M43 57C100 80 150 140 165 190C195 270 193 340 187 440C165 430 145 410 130 404C100 392 60 388 13 392C9 300 12 220 16 170Q25 105 43 57Z",
  "M224 89C330 77 420 77 516 76V309C420 306 330 301 224 295Z",
  "M554 75L670 67Q730 73 780 84Q800 92 816 103Q850 112 866 128Q860 195 866 259Q850 268 816 280C790 298 740 314 673 318L554 310Z",
  "M820 293L836 290Q826 330 836 369L811 354Q830 325 820 293Z",
  "M377 347H497L501 404L509 346C560 352 610 370 630 400Q650 440 661 499L616 503L662 514C664 570 664 600 634 696Q550 678 432 685Q400 650 390 610Q382 560 377 503L402 497L377 490Q382 430 377 347Z",
  "M713 323C780 340 770 375 841 394L836 511L800 513L836 521C820 600 825 640 839 704L803 706C780 650 765 655 700 643C700 550 708 420 713 323Z",
  "M61 503L356 500L362 720C364 760 375 775 413 817L397 872C300 868 200 862 61 827C75 740 70 620 61 503Z",
];

const PIECES_SW = [
  "M79 18Q105 22 137 19Q150 60 166 95Q172 130 158 165Q130 235 111 242Q80 225 62 170Q40 120 57 75Q70 45 79 18Z",
  "M451 52C580 60 700 40 825 18Q835 55 855 70Q890 82 921 96Q905 125 920 152Q905 163 870 175Q835 185 832 239C710 225 580 210 457 230Q465 185 445 184L411 188Q406 140 409 94L430 96Q455 98 454 80Z",
  "M66 345L115 344L122 383L121 344Q160 330 196 279L239 303C215 380 232 430 239 667L207 671L196 643L204 673Q175 680 152 696C90 630 60 540 67 440Z",
  "M303 275C330 300 350 300 375 299L445 298C465 360 467 450 455 520Q435 590 433 670Q390 668 352 696L268 627C280 520 290 450 290 400Q290 350 268 308Z",
  "M470 299Q490 275 508 275C550 285 580 288 651 286C638 350 636 380 651 550Q600 552 566 562C530 440 520 350 470 299Z",
  "M679 304C740 285 790 255 820 262Q840 262 858 269C830 340 840 400 833 548L746 560C720 450 715 350 679 304Z",
  "M497 587L530 597Q495 625 530 670L500 673Q478 660 467 630Q475 600 497 587Z",
  "M557 580L597 581Q578 630 596 680L557 679Q551 630 557 580Z",
  "M632 587H657V673L620 674Q630 630 632 587Z",
  "M676 582L715 583V670H690Q692 610 676 582Z",
  "M755 586L781 577L808 586Q820 605 819 625Q815 650 800 665Q775 671 752 660Q740 630 743 605Z",
  "M862 470L960 518Q930 575 960 628L862 676Q870 570 862 470Z",
];

const PIECES_SE = [
  "M66 265C110 285 180 302 253 304C265 350 255 420 247 548Q190 565 150 572C120 440 90 370 26 307Z",
  "M301 295C370 297 350 275 385 272C430 268 430 282 450 279C500 275 505 280 537 314C460 360 440 450 409 563Q360 558 313 537C310 450 295 350 301 295Z",
  "M609 87Q640 97 676 93C685 130 690 160 702 164C715 160 725 130 735 93Q770 96 802 87C840 160 851 250 851 340C850 500 820 690 767 701C730 690 725 575 703 567C680 575 680 690 643 698C590 690 553 500 553 320C555 210 590 130 609 87Z",
  "M181 586L222 601Q170 640 222 682L183 692Q155 675 143 638Q150 600 181 586Z",
  "M243 575L286 572Q240 630 286 692L243 690Q215 635 243 575Z",
  "M317 578H340L344 685L304 689Q317 640 317 578Z",
  "M362 574L402 577L400 686H377Q378 620 362 574Z",
  "M440 575Q470 562 502 577Q515 600 521 640Q515 670 500 678Q470 692 440 680Q425 665 421 640Q423 600 440 575Z",
];

function Pieces({ at, paths }: { at: string; paths: string[] }) {
  return (
    <g transform={`translate(${at}) scale(.33333)`} stroke="#8f8f8f" strokeWidth="2.700">
      {paths.map((d) => (
        <path key={d} d={d} />
      ))}
    </g>
  );
}

function Drawing() {
  return (
    <svg role="img" aria-label="fennec.pattern.svg" viewBox="126 162 832 620" className="h-[620px] w-[832px] max-w-none shrink-0" fill="none">
      <path d="M213 713H799V264H801V716H213z" fill="#666" />
      <rect x="211.500" y="262.500" width="587.500" height="450.500" fill="#fff" stroke="#666" />
      <path
        d="M570.500 262V409.500L507.500 412.500 502.500 467 348 478 308 547M678 266L679 362 614.500 366 630 481 657.500 552.500 514 545.300M212 555.300L499.500 548.300 553.500 712M684.600 710L678.500 491.500H799"
        stroke="#bdbdbd"
      />
      <Pieces at="205 255" paths={PIECES_NW} />
      <Pieces at="500 255" paths={PIECES_NE} />
      <Pieces at="205 465" paths={PIECES_SW} />
      <Pieces at="500 465" paths={PIECES_SE} />
      <path d="M724.500 278v10M724.500 350v11" stroke="#444" />
      <g transform="translate(205 465) scale(.33333)">
        <path d="M200 36Q260 3 331 13Q322 95 331 181Q300 188 272 205Q205 120 200 36Z" fill="#e93df5" stroke="#7a3a80" strokeWidth="2.700" />
      </g>
    </svg>
  );
}

const SWATCHES = [
  "#000000", "#1a1a1a", "#333333", "#4d4d4d", "#666666", "#808080", "#999999", "#b3b3b3", "#cccccc", "#e6e6e6", "#ececec", "#f2f2f2", "#f9f9f9", "#ffffff",
  "#75140c", "#ea3323", "#808026", "#fffd54", "#377e21", "#75fb4c", "#377e7f", "#74fbfd", "#00007b", "#001df5", "#75147c", "#ea3df7",
  "#270000", "#4f0a04", "#76140c", "#9d1e15", "#c5281c", "#ea3323", "#eb4539", "#ec615b", "#ef8683", "#f3adab", "#f8d6d4",
  "#250d0d", "#4a1a19", "#6f2625", "#943331", "#b9403d",
];

function DockButtons({ faded = false }: { faded?: boolean }) {
  return (
    <span className={`mt-[6px] flex gap-[24px] self-start ${faded ? "text-[#bcbdbd]" : "text-[#7f8283]"}`}>
      <button aria-label="Iconify">
        <svg viewBox="0 0 12 12" className="size-3" fill="none" stroke="currentColor"><rect x=".5" y=".5" width="10.500" height="10.500" rx="1.500" /><path d="M8 3v6L3.500 6z" fill="currentColor" stroke="none" /></svg>
      </button>
      <button aria-label="Close">
        <svg viewBox="0 0 12 12" className="size-3" fill="none" stroke="currentColor"><rect x=".5" y=".5" width="10.500" height="10.500" rx="1.500" /><path d="M3.200 3.200l5 5M8.200 3.200l-5 5" strokeWidth="2" /></svg>
      </button>
    </span>
  );
}

function Lights({ color }: { color: string }) {
  return (
    <span className="flex gap-2">
      {[0, 1, 2].map((i) => (
        <span key={i} className={`size-3 rounded-full ${color}`} />
      ))}
    </span>
  );
}

function MainWindow() {
  return (
    <section className="flex flex-1 flex-col overflow-hidden rounded-[5px] bg-[#f6f5f4] shadow-[0_0_1px_rgba(0,0,0,0.4),0_18px_44px_rgba(0,0,0,0.45)]">
      <header className="relative flex h-[22px] shrink-0 items-center border-b border-[#b9b9b9] bg-linear-to-b from-[#ebebeb] to-[#d3d3d3] pl-2">
        <Lights color="bg-[#8e8d92]" />
        <h1 className="flex-1 pr-[60px] text-center font-['Inter',sans-serif] text-[13px] text-[#505050]">*fennec.pattern.svg - Inkscape</h1>
      </header>

      <div className="flex h-[42px] shrink-0 items-center pl-[3px]">
        {COMMANDS.map((items, i) => (
          <React.Fragment key={i}>
            {i > 0 && <Separator />}
            <ToolGroup items={items} />
          </React.Fragment>
        ))}
      </div>

      <div className="flex h-[42px] shrink-0 items-center pl-[3px] text-[#929595]">
        {SELECT_TOOLS.map((items, i) => (
          <React.Fragment key={i}>
            {i > 0 && <Separator />}
            <ToolGroup items={items} />
          </React.Fragment>
        ))}
        <Separator />
        <label htmlFor="x" className="mr-1 ml-[3px]">X:</label>
        <Spin id="x" label="X" value="7.712" width="w-[113px]" tone="toolbar" />
        <label htmlFor="y" className="mr-1 ml-2">Y:</label>
        <Spin id="y" label="Y" value="26.408" width="w-[113px]" tone="toolbar" />
        <label htmlFor="w" className="mr-1 ml-[7px]">幅:</label>
        <Spin id="w" label="幅" value="5.636" width="w-[109px]" tone="toolbar" />
        <button aria-label="Lock ratio" className="mr-[13px] ml-[14px] flex items-center"><Icon>{ICONS.lockOpen}</Icon></button>
        <label htmlFor="h" className="mr-1">高さ:</label>
        <Spin id="h" label="高さ" value="8.311" width="w-[109px]" tone="toolbar" />
        <span className="ml-1 flex">
          <DropDown id="unit" label="Unit" value="cm" width="w-[60px]" look="border-[#cdc7c2] bg-linear-to-b from-[#f9f8f7] to-[#ecebe9] text-[#2e3436] shadow-sm" />
        </span>
        <Separator />
        <span className="flex gap-px">
          {(["scaleStroke", "scaleCorners", "moveGradients", "movePatterns"] as IconName[]).map((n) => (
            <button key={n} aria-label={n} aria-pressed="true" className="flex h-[34px] w-9 items-center justify-center rounded-[5px] bg-[#d5d1cd]">
              <Icon>{ICONS[n]}</Icon>
            </button>
          ))}
        </span>
      </div>

      <div className="flex min-h-0 flex-1">
        <nav className="flex w-[52px] shrink-0 flex-col items-start gap-px pt-1 pl-1">
          {TOOLS.map(([label, art], i) => (
            <button key={label} aria-label={label} className={`flex h-[33px] w-[43px] shrink-0 items-center justify-center rounded-[5px] pr-px pb-px ${i === 0 ? "bg-[#d5d1cd]" : ""}`}>
              <Icon size="lg">{art}</Icon>
            </button>
          ))}
          <button aria-label="More" className="flex h-[39px] w-[43px] items-center justify-center">
            <svg viewBox="0 0 6 10" className="h-[10px] w-[6px]" fill={INK}><path d="M0 0l6 5-6 5z" /></svg>
          </button>
        </nav>

        <div className="flex w-[18px] shrink-0 flex-col">
          <button aria-label="Lock guides" className="flex h-[18px] items-center justify-center rounded-[4px] border border-[#cdc7c2] bg-[#f6f5f4]">
            <Icon>
              <path d="M4.500 7V4.500c0-4.500 7-4.500 7 0V7" stroke="#111" strokeWidth="1.800" />
              <path d="M1.700 7h12.600v7.800H1.700z" fill="#f3bd45" stroke="#111" strokeWidth="1.300" />
              <path d="M8 9v3.700M7 9.500h2" stroke="#111" strokeWidth="1.500" />
            </Icon>
          </button>
          <RulerY />
        </div>

        <div className="flex min-w-0 flex-1 flex-col">
          <RulerX />
          <div className="flex min-h-0 flex-1 overflow-hidden bg-white">
            <Drawing />
          </div>
          <div className="flex h-[18px] shrink-0 items-center bg-[#cdcdcd] pl-[252px]">
            <span className="h-[6px] w-[360px] rounded-full bg-[#7f8282]" />
          </div>
        </div>

        <div className="w-[19px] shrink-0 bg-[#cdcdcd]">
          <button aria-label="Color management" className="flex h-[18px] w-[18px] items-center justify-center rounded-[4px] border border-[#cdc7c2] bg-[#f0efed]">
            <svg viewBox="0 0 12 12" className="size-3" fill="none" stroke="#bbb"><rect x=".5" y=".5" width="11" height="11" rx="2" fill="#fafafa" /><path d="M4.500 6V3.500h3V9M4.500 6h3" /></svg>
          </button>
        </div>

        <aside className="flex w-[473px] shrink-0 flex-col bg-white text-[#2e3436]">
          <header className="flex h-[34px] shrink-0 items-center pr-3">
            <Icon>{fillPen}</Icon>
            <h2 className="flex-1 pl-px">フィル/ストローク(F) (⇧⌘F)</h2>
            <DockButtons />
          </header>
          <div className="flex-1 border border-[#d5d0cc] p-[3px]">
            <div className="flex h-full flex-col border border-[#cdc7c2]">
              <div role="tablist" className="flex h-9 items-center gap-8 bg-[#dedcd9] pl-5 font-bold text-[#929595]">
                <button role="tab" aria-selected="true" className="flex items-center gap-1 text-[#2e3436]">
                  <Icon><path d="M0 0h16v16H0z" fill="url(#gSky)" /></Icon>フィル(F)
                </button>
                <button role="tab" aria-selected="false" className="flex items-center gap-1">
                  <Icon><path d="M1 1h14v14H1z" stroke="#555" strokeWidth="1.500" /></Icon>ストロークの塗り(P)
                </button>
                <button role="tab" aria-selected="false" className="flex items-center gap-1">
                  <Icon>
                    <path d="M0 4h12M0 14.500h16" stroke="#000" strokeWidth="1.800" />
                    <path d="M0 9.500h16" stroke="#000" strokeWidth="1.500" strokeDasharray="3 1.500" />
                    <path d="M11 .5l5 3.500-5 3.500z" fill="#000" />
                  </Icon>ストロークのスタイル(Y)
                </button>
              </div>
            </div>
          </div>
        </aside>

        <aside className="flex w-[46px] shrink-0 flex-col items-center gap-[14px] pt-[13px]">
          <button aria-label="Snap" className="flex">
            <Icon>
              <path d="M4 4l7 7" stroke="#111" strokeWidth="1.300" />
              <path d="M11.500 7.500v4.500H7z" fill="#111" />
              <circle cx="2.800" cy="2.800" r="2" fill="#cfd4ff" stroke="#2b3bf0" strokeWidth="1.500" />
              <circle cx="13" cy="13" r="2" fill="#a9c8ef" stroke="#5b8f4d" strokeWidth="1.500" />
            </Icon>
          </button>
          <span className="mt-[2px] h-px w-9 bg-[#dcdad6]" />
          <button aria-label="Snap bounding box" className="flex opacity-30">
            <Icon><circle cx="3" cy="5" r="2" stroke="#2b3bf0" strokeWidth="1.500" /></Icon>
          </button>
        </aside>
      </div>

      <div className="flex h-[21px] shrink-0 overflow-hidden bg-[#cdcdcd]">
        <button aria-label="None" className="w-[19px] shrink-0 bg-white">
          <svg viewBox="0 0 19 21" className="h-[21px] w-[19px]" stroke="#7c1c14" strokeWidth="1.800"><path d="M0 0l19 21M19 0L0 21" /></svg>
        </button>
        {SWATCHES.map((c, i) => (
          <button key={i} aria-label={c} className="w-[19px] shrink-0" style={{ backgroundColor: c }} />
        ))}
      </div>
      <div className="flex h-[13px] shrink-0 items-center bg-[#cdcdcd] pl-[3px]">
        <span className="h-[6px] w-[234px] rounded-full bg-[#7f8282]" />
      </div>

      <footer className="flex h-[34px] shrink-0 items-center overflow-hidden whitespace-nowrap text-[#2e3436]">
        <dl className="grid w-[118px] shrink-0 grid-cols-[68px_1fr] pl-[2px] leading-[17px]">
          <dt>フィル:</dt><dd>該当なし</dd>
          <dt>ストローク:</dt><dd>該当なし</dd>
        </dl>
        <label htmlFor="opacity" className="w-[17px] pl-[2px]">O:</label>
        <Spin id="opacity" label="O" value="100" width="w-[68px]" tone="toolbar" />
        <span className="ml-[2px] h-[34px] w-px bg-[#dcdad6]" />
        <button aria-label="Toggle visibility" className="ml-[11px]">
          <Icon faded>
            <path d="M1 9q7-6 14 0-7 7-14 0z" fill="#eee" stroke="#333" strokeWidth="1.300" />
            <circle cx="8" cy="9" r="3.200" fill="#555" />
            <path d="M3 6L.8 3M5.500 4.500L4 .8M8 4V.3M10.500 4.500L12 .8M13 6l2.200-3M3 12.500l5 2.500 5-2.500" stroke="#333" strokeWidth="1.300" />
          </Icon>
        </button>
        <button aria-label="Lock layer" className="ml-5"><Icon faded>{padlockOpen("#e8e2c0")}</Icon></button>
        <span className="ml-[10px] flex text-[10px]">
          <DropDown id="layer" label="Layer" value="(root)" width="w-[70px] pl-[6px]" look="border-[#cdc7c2] bg-linear-to-b from-[#f9f8f7] to-[#ecebe9]" />
        </span>
        <p className="ml-[6px] leading-[13px]">
          オブジェクトが選択されていません。オブジェクトをクリック、Shift+クリック、ス
          <br />
          グして選択してください。
        </p>
      </footer>
    </section>
  );
}

const TABS: [string, string][] = [
  ["ページ", "w-[60px]"], ["ガイド", "w-[60px]"], ["グリッド", "w-[72px]"], ["スナップ", "w-[72px]"],
  ["色", "w-[52px]"], ["スクリプト", "w-[84px]"], ["メタデータ", "w-[84px]"], ["ライセンス", "w-[84px]"],
];

const SIZES: [string, string][] = [
  ["A4", "210.0 x 297.0 mm"], ["US Letter", "8.5 x 11.0 in"], ["US Legal", "8.5 x 14.0 in"], ["US Executive", "7.2 x 10.5 in"],
  ["A0", "841.0 x 1189.0 mm"], ["A1", "594.0 x 841.0 mm"], ["A2", "420.0 x 594.0 mm"], ["A3", "297.0 x 420.0 mm"], ["A5", "148.0 x 210.0 mm"],
];

function Check({ label, checked }: { label: string; checked?: boolean }) {
  return (
    <label className="flex h-5 items-center gap-1 pb-px pl-1">
      <span className="relative flex size-4">
        <input type="checkbox" defaultChecked={checked} className="peer size-4 appearance-none rounded-[3px] border border-[#dcd8d4] bg-[#f7f6f5]" />
        <svg aria-hidden="true" viewBox="0 0 16 16" className="pointer-events-none absolute inset-0 hidden size-4 peer-checked:block" fill="none" stroke="#858889" strokeWidth="2.500"><path d="M3.500 7.500L7 11.500 13 4" /></svg>
      </span>
      {label}
    </label>
  );
}

function Radio({ label, checked }: { label: string; checked?: boolean }) {
  return (
    <label className="flex items-center gap-1">
      <input
        type="radio"
        name="orientation"
        defaultChecked={checked}
        className="size-4 appearance-none rounded-full border border-[#d8d4d0] bg-[#f7f6f5] checked:bg-[radial-gradient(#7f8283_0_3px,#f7f6f5_3px)]"
      />
      {label}
    </label>
  );
}

function Expander({ label }: { label: string }) {
  return (
    <button className="flex h-6 items-center gap-[5px] pb-px pl-[10px]">
      <svg aria-hidden="true" viewBox="0 0 5 9" className="h-[9px] w-[5px]" fill="#858889"><path d="M0 0l5 4.500L0 9z" /></svg>
      {label}
    </button>
  );
}

function PropertiesDialog() {
  const unitLook = "border-[#dcd8d4] bg-[#f6f5f4] text-[#929595]";
  return (
    <section className="absolute top-[210px] right-12 flex w-[652px] flex-col overflow-hidden rounded-t-[5px] bg-[#f6f5f4] text-[#8c8f90] shadow-[0_0_1px_rgba(0,0,0,0.3),0_8px_20px_rgba(0,0,0,0.15)]">
      <header className="flex h-[22px] items-center border-b border-[#e2e2e2] bg-[#f6f6f6] pl-2">
        <Lights color="bg-[#dddddd]" />
        <h2 className="flex-1 pr-[60px] text-center text-[#b4b4b4]">ドキュメントのプロパティ(D) (⇧⌘D)</h2>
      </header>
      <header className="flex h-[34px] items-center pr-3">
        <span className="mt-1"><Icon>{pageWrench}</Icon></span>
        <h3 className="flex-1 pl-px">ドキュメントのプロパティ(D) (⇧⌘D)</h3>
        <DockButtons faded />
      </header>
      <div className="border border-[#dcd8d4] bg-[#fcfcfc] p-[3px]">
        <div className="border border-[#dcd8d4]">
          <div role="tablist" className="flex h-[37px] justify-between border-b border-[#dcd8d4] bg-[#e9e8e6] pr-[9px] pl-2 font-bold text-[#929595]">
            {TABS.map(([name, width], i) => (
              <button key={name} role="tab" aria-selected={i === 0} className={`border-b-[3px] pt-[4px] ${width} ${i === 0 ? "border-[#4a86dc]" : "border-transparent"}`}>
                {name}
              </button>
            ))}
          </div>

          <div className="flex flex-col px-1 pt-[2px] pb-[6px]">
            <h4 className="h-[18px] font-bold leading-[19px]">一般</h4>
            <div className="flex items-center gap-[7px]">
              <label htmlFor="display-units">Display units:</label>
              <DropDown id="display-units" label="Display units" value="cm" width="w-[60px]" look={unitLook} />
            </div>
            <h4 className="mt-4 h-[18px] font-bold leading-[19px]">ページサイズ</h4>
            <div className="h-[168px] overflow-hidden border border-[#d5d1cd]">
              <table className="w-full table-fixed text-[#2e3436]">
                <tbody>
                  {SIZES.map(([name, dims], i) => (
                    <tr key={name} className={`h-[18px] ${i === 0 ? "bg-[#4a86dc] text-white" : ""}`}>
                      <td className="w-[138px] pb-[2px] pl-1 leading-4">{name}</td>
                      <td className="pb-[2px] pl-1 leading-4">{dims}</td>
                    </tr>
                  ))}
                </tbody>
              </table>
            </div>
            <div className="flex h-[25px] items-center pt-[2px] pr-[10px]">
              <span className="flex-1">方向:</span>
              <span className="flex gap-[17px]">
                <Radio label="縦(P)" />
                <Radio label="横(L)" checked />
              </span>
            </div>

            <fieldset className="border border-[#dcdad5]">
              <legend className="leading-[18px]">カスタムサイズ</legend>
              <div className="mt-[2px] flex items-center justify-between pr-[10px] pl-[10px]">
                <span className="flex items-center gap-[6px]"><label htmlFor="pw">幅(W):</label><Spin id="pw" label="幅(W)" value="2838.18384" width="w-[129px]" tone="dialog" /></span>
                <span className="flex items-center gap-[6px]"><label htmlFor="ph">高さ(H):</label><Spin id="ph" label="高さ(H)" value="2178.08472" width="w-[129px]" tone="dialog" /></span>
                <span className="flex items-center gap-[6px]"><label htmlFor="pu">単位(N):</label><DropDown id="pu" label="単位(N)" value="px" width="w-[60px]" look={unitLook} /></span>
              </div>
              <Expander label="ページサイズをコンテンツに合わせて変更(Z)..." />
            </fieldset>

            <fieldset className="mt-px border border-[#dcdad5]">
              <legend className="leading-[18px]">拡大縮小</legend>
              <div className="mt-[2px] flex items-center justify-between pr-[33px] pl-[10px]">
                <span className="flex items-center gap-[6px]"><label htmlFor="sx">Scale x:</label><Spin id="sx" label="Scale x" value="37.79528" width="w-[115px]" tone="dialog" /></span>
                <span className="flex items-center gap-[6px] pr-5 text-[#d3d1ce]"><label htmlFor="sy">Scale y:</label><Spin id="sy" label="Scale y" value="37.79528" width="w-[115px]" tone="disabled" /></span>
                <span>User units per cm.</span>
              </div>
              <Expander label="Viewbox..." />
            </fieldset>

            <div className="mt-5 grid grid-cols-[299px_1fr] pl-1">
              <div>
                <h4 className="h-[18px] font-bold leading-[18px]">Background</h4>
                <Check label="Checkerboard background" />
                <div className="mt-[2px] flex h-[34px] items-center gap-[6px]">
                  <span>背景色(G):</span>
                  <button aria-label="背景色(G)" className="flex h-[34px] w-[52px] items-center justify-center rounded-[5px] border border-[#dcd8d4] bg-[#f6f5f4]">
                    <span className="flex h-6 w-8 overflow-hidden rounded-[3px] bg-white">
                      <span className="h-6 w-4 bg-[conic-gradient(#c6c6c6_25%,#adadad_0_50%,#c6c6c6_0_75%,#adadad_0)] bg-size-[13px_13px]" />
                    </span>
                  </button>
                </div>
                <h4 className="mt-[2px] h-[17px] font-bold leading-[17px]">表示</h4>
                <Check label="アンチエイリアスを使用する" checked />
              </div>
              <div>
                <h4 className="h-[17px] font-bold leading-[17px]">境界線</h4>
                <Check label="ページの境界を表示する(B)" checked />
                <Check label="描画より前面に境界線を表示する(T)" />
                <Check label="境界線に影を表示する(S)" checked />
                <div className="mt-[2px] flex items-center gap-[6px]">
                  <span>境界線の色(C):</span>
                  <button aria-label="境界線の色(C)" className="flex h-[34px] w-[52px] items-center justify-center rounded-[5px] border border-[#dcd8d4] bg-[#f6f5f4]">
                    <span className="h-6 w-8 rounded-[3px] bg-[#666]" />
                  </button>
                </div>
              </div>
            </div>
          </div>
        </div>
      </div>
    </section>
  );
}

export default function App() {
  return (
    <main
      lang="ja"
      className="relative flex min-h-screen flex-col overflow-hidden bg-white px-14 pt-[38px] pb-[74px] font-['Liberation_Sans','DejaVu_Sans','Noto_Sans_CJK_JP',sans-serif] text-[12px] leading-4"
    >
      <Gradients />
      <MainWindow />
      <PropertiesDialog />
    </main>
  );
}
